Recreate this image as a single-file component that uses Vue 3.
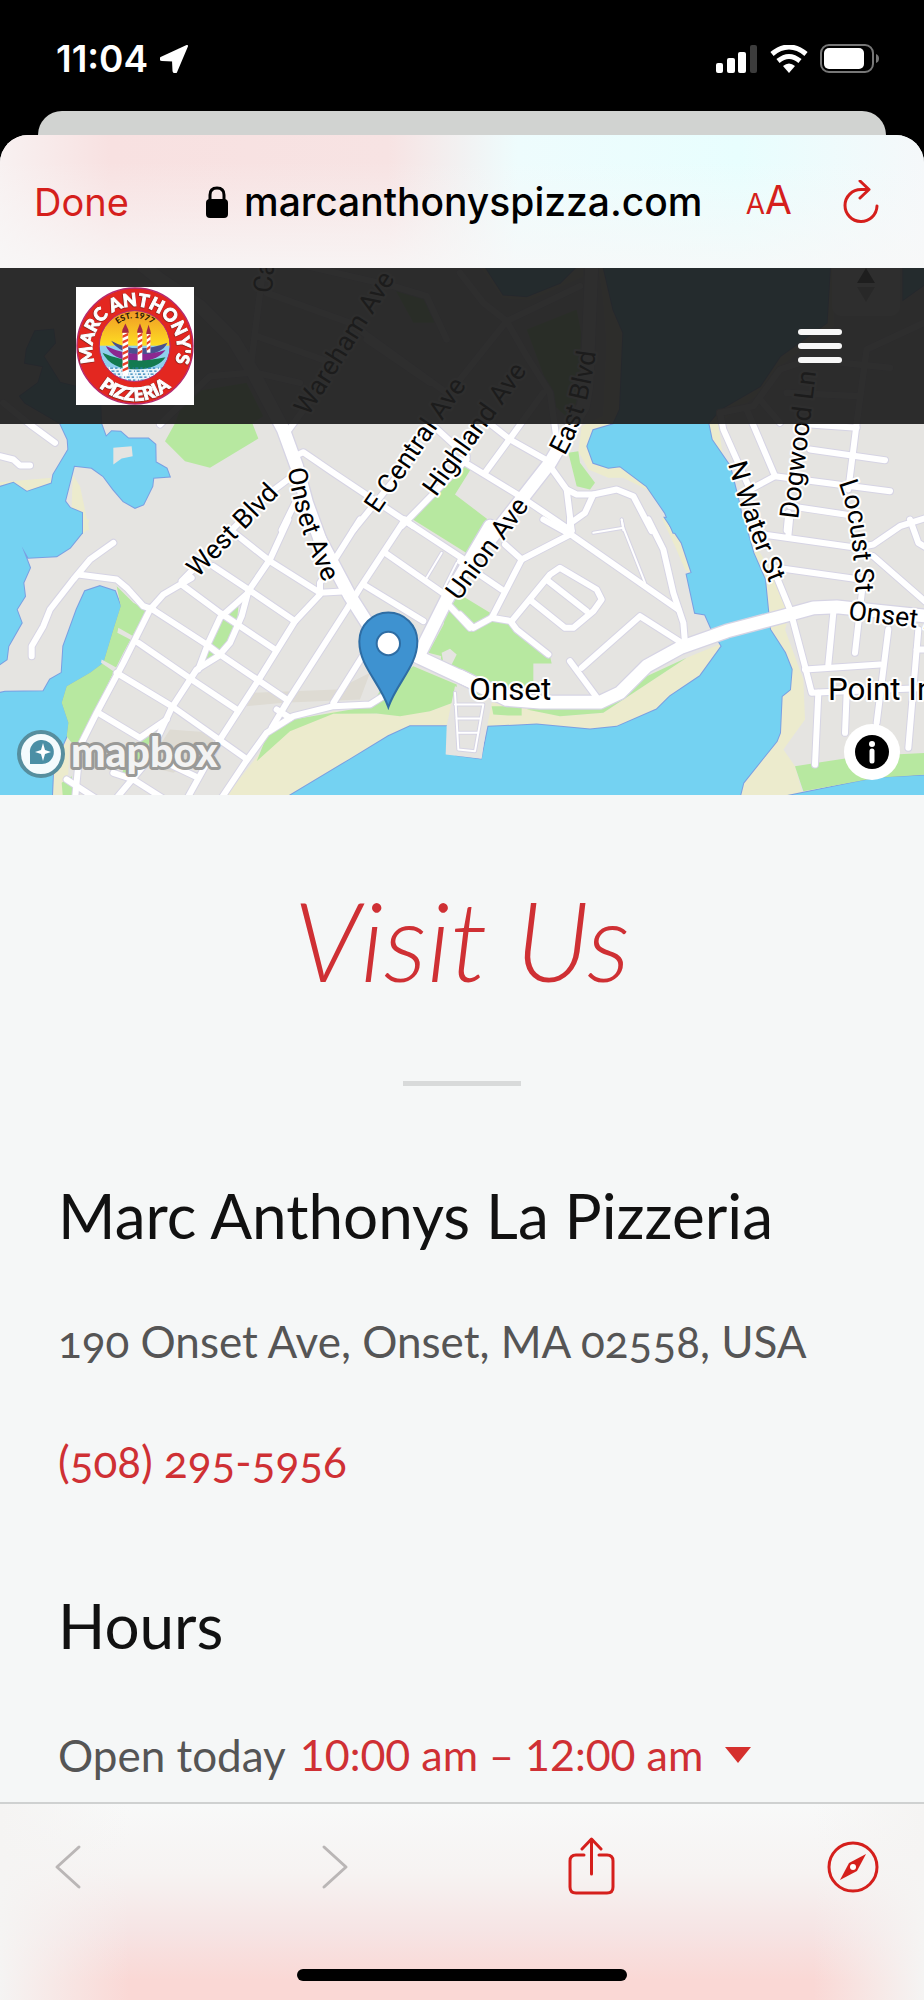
<template>
  <div class="screen">
    <!-- Status bar -->
    <header class="status">
      <div class="status-left">
        <span class="hora">11:04</span>
        <svg class="ico-loc" viewBox="0 0 28 28">
          <path d="M27 1 L1 13 Q0 15 2 15 L13 15.500 L13.500 26 Q14 28 16 27 Z" fill="#fff" stroke="#fff" stroke-width="2" stroke-linejoin="round" />
        </svg>
      </div>
      <div class="status-right">
        <svg class="ico-signal" viewBox="0 0 42 28">
          <rect x="0" y="18" width="7" height="10" rx="2" fill="#fff" />
          <rect x="11" y="13" width="8" height="15" rx="2" fill="#fff" />
          <rect x="22" y="7" width="8" height="21" rx="2" fill="#fff" />
          <rect x="34" y="0" width="7" height="28" rx="2" fill="#3c3c3c" />
        </svg>
        <svg class="ico-wifi" viewBox="0 0 38 28">
          <path d="M2 9 Q19 -5 36 9 M8 16 Q19 7 30 16" fill="none" stroke="#fff" stroke-width="5" />
          <path d="M13 21 Q19 16 25 21 L19 28 Z" fill="#fff" />
        </svg>
        <svg class="ico-bat" viewBox="0 0 60 30">
          <rect x="1" y="1" width="52" height="27" rx="8" fill="none" stroke="#777" stroke-width="2" />
          <rect x="4" y="4" width="40" height="21" rx="5" fill="#fff" />
          <path d="M56 10 Q59 11 59 14.500 Q59 18 56 19 Z" fill="#777" />
        </svg>
      </div>
    </header>
    <div class="card-back"></div>

    <!-- Browser sheet -->
    <div class="sheet">
      <div class="url-bar">
        <button class="btn-done" type="button">Done</button>
        <div class="url">
          <svg class="ico-lock" viewBox="0 0 22 32">
            <rect x="0" y="13" width="22" height="19" rx="4" />
            <path d="M4 15 V9 Q4 2 11 2 Q18 2 18 9 V15" fill="none" stroke="#000" stroke-width="3" />
          </svg>
          <span>marcanthonyspizza.com</span>
        </div>
        <button class="btn-aa" type="button" aria-label="Text size"><small>A</small>A</button>
        <button class="btn-reload" type="button" aria-label="Reload">
          <svg viewBox="0 0 38 44">
            <path d="M35 26 A16 16 0 1 1 19 9.500 L26 9.500 M18 1 L27 9.500 L18 18" />
          </svg>
        </button>
      </div>

      <section class="map-area">
        <svg class="map" viewBox="0 24 2772 1584" preserveAspectRatio="xMidYMid slice">
          <rect x="0" y="0" width="2772" height="1640" fill="#e5e4e1" />
          <g v-for="capa in capas" :key="capa.clase" :class="capa.clase">
            <g v-for="t in tiles" :key="t.id" :transform="`translate(${t.x} ${t.y})`">
              <polygon v-for="p in t[capa.datos]" :key="p" :points="p" />
            </g>
          </g>
          <g v-for="capa in ['casing', 'fill']" :key="capa" :class="capa">
            <g v-for="t in tiles" :key="t.id" :transform="`translate(${t.x} ${t.y})`">
              <polyline v-for="r in t.thin" :key="r" :points="r" class="thin" />
              <polyline v-for="r in t.roads" :key="r" :points="r" />
              <polyline v-for="r in t.major" :key="r" :points="r" class="major" />
            </g>
          </g>

          <!-- Street names -->
          <defs>
            <path v-for="l in labels" :id="l.id" :key="l.id" :d="l.d" />
          </defs>
          <text v-for="l in labels" :key="l.id" class="street">
            <textPath :href="'#' + l.id">{{ l.text }}</textPath>
          </text>
          <text class="place" x="1408" y="1322">Onset</text>
          <text class="place" x="2484" y="1322">Point Independence</text>

          <!-- Marker -->
          <g stroke="#2e6da4" stroke-width="6">
            <path d="M1165 1343 C1140 1270 1078 1220 1078 1146 A87 87 0 0 1 1252 1146 C1252 1220 1190 1270 1165 1343 Z" fill="#3e92d0" />
            <circle cx="1165" cy="1152" r="35" fill="#fff" />
          </g>
        </svg>

        <div class="compass-ctrl">
          <svg viewBox="0 0 18 34">
            <path d="M9 0 L18 15 H0 Z" fill="#222" />
            <path d="M9 34 L18 19 H0 Z" fill="#aaa" />
          </svg>
        </div>

        <nav class="site-nav">
          <a href="#" class="logo" aria-label="Marc Anthony's Pizzeria">
            <svg viewBox="0 0 356 356">
              <defs>
                <path id="arcoTop" d="M62 240 A128 128 0 1 1 294 240" />
                <path id="arcoBottom" d="M18 200 A161 161 0 0 0 338 200" />
                <path id="arcoEst" d="M94 178 A84 84 0 0 1 262 178" />
                <clipPath id="disco"><circle cx="177" cy="178" r="106" /></clipPath>
                <linearGradient id="cielo" x1="0" y1="0" x2="0" y2="1">
                  <stop offset="0" stop-color="#ee9026" />
                  <stop offset="1" stop-color="#ffe322" />
                </linearGradient>
              </defs>
              <rect width="356" height="356" fill="#fff" />
              <circle cx="178" cy="178" r="175" fill="#e32720" stroke="#b52a70" stroke-width="4" />
              <g clip-path="url(#disco)">
                <rect x="60" y="60" width="236" height="125" fill="url(#cielo)" />
                <rect x="60" y="177" width="236" height="120" fill="#8fcfee" />
                <path d="M106 162 Q180 205 276 168 Q262 200 200 206 Q130 200 106 162" fill="#49508f" />
                <path d="M90 178 Q180 220 270 190 Q250 220 190 226 Q110 222 90 178" fill="#8b2790" />
                <path d="M80 198 Q160 236 270 212 Q248 246 180 250 Q104 246 80 198" fill="#137a50" />
                <path d="M70 236 Q180 260 290 238 V300 H70 Z" fill="#eaf4fa" />
                <path v-for="n in 5" :key="n" :d="`M${76 + n * 4} ${236 + n * 9} H290`" stroke="#287fb5" stroke-width="4" stroke-dasharray="7 8 3 5 9 6" />
              </g>
              <circle cx="177" cy="178" r="107" fill="none" stroke="#b52a70" stroke-width="3" />
              <g v-for="p in postes" :key="p.x">
                <path :d="`M${p.x} ${p.y} V${p.fin}`" stroke="#fff" :stroke-width="p.w" />
                <path v-for="y in rayas(p)" :key="y" :d="`M${p.x - p.w / 2} ${y} l${p.w} -8 v8 l${-p.w} 8 Z`" fill="#e8402a" />
                <path :d="`M${p.x - p.w / 2 - 2} ${p.y} L${p.x - p.w / 2} ${p.y - 10} L${p.x} ${p.y - 28} L${p.x + p.w / 2} ${p.y - 10} l2 10 Z`" fill="#a72845" />
              </g>
              <g class="logo-text">
                <text><textPath href="#arcoTop" startOffset="50%">MARC ANTHONY'S</textPath></text>
                <text><textPath href="#arcoBottom" startOffset="50%">PIZZERIA</textPath></text>
              </g>
              <text class="logo-est"><textPath href="#arcoEst" startOffset="50%">EST. 1977</textPath></text>
            </svg>
          </a>
          <button class="btn-menu" type="button" aria-label="Menu">
            <span></span>
            <span></span>
            <span></span>
          </button>
        </nav>

        <a class="mapbox" href="#" aria-label="Mapbox">
          <svg viewBox="0 0 206 50">
            <circle cx="25" cy="25" r="22" fill="#f4fbfd" stroke="#568e9e" stroke-width="4" />
            <path d="M14 35 V25 A12 12 0 1 1 26 35 Z" fill="#4b8fa5" />
            <path d="M27 14 L29 21 L35 23 L29 25 L27 32 L25 25 L19 23 L25 21 Z" fill="#fff" />
            <text x="55" y="38">mapbox</text>
          </svg>
        </a>
        <button class="btn-info" type="button" aria-label="Map information">
          <svg viewBox="0 0 34 34">
            <circle cx="17" cy="17" r="17" />
            <circle cx="17" cy="9" r="3" fill="#fff" />
            <path d="M17 16 V26" stroke="#fff" stroke-width="5" stroke-linecap="round" />
          </svg>
        </button>
      </section>

      <main class="content">
        <h1>Visit Us</h1>
        <hr />
        <h2>Marc Anthonys La Pizzeria</h2>
        <p class="address">190 Onset Ave, Onset, MA 02558, USA</p>
        <p class="phone"><a href="tel:5082955956">(508) 295-5956</a></p>
        <h2 class="hours-title">Hours</h2>
        <div class="hours">
          <span>Open today</span>
          <button type="button" class="btn-hours" @click="abierto = !abierto">
            10:00 am – 12:00 am
            <svg viewBox="0 0 26 16"><path d="M0 0 H26 L13 16 Z" fill="#d5302d" /></svg>
          </button>
        </div>
      </main>
    </div>

    <!-- Browser toolbar -->
    <footer class="toolbar">
      <div class="tools">
        <button type="button" disabled aria-label="Back">
          <svg viewBox="0 0 52 60"><path d="M37 10 L15 30 L37 50" stroke="#bab6b6" /></svg>
        </button>
        <button type="button" disabled aria-label="Forward">
          <svg viewBox="0 0 52 60"><path d="M20 10 L42 30 L20 50" stroke="#bab6b6" /></svg>
        </button>
        <button type="button" aria-label="Share">
          <svg viewBox="0 0 52 60">
            <path d="M19 18 H11 Q5 18 5 24 V50 Q5 56 11 56 H42 Q48 56 48 50 V24 Q48 18 42 18 H34 M26.500 37 V3 M17 12 L26.500 2 L36 12" />
          </svg>
        </button>
        <button type="button" aria-label="Open in browser">
          <svg viewBox="0 0 52 60">
            <circle cx="26" cy="30" r="24" />
            <path d="M39 17 L30 34 L13 43 L22 26 Z" fill="#d51f1c" stroke="none" />
            <circle cx="26" cy="30" r="3" fill="#fff" stroke="none" />
          </svg>
        </button>
      </div>
      <div class="home-bar"></div>
    </footer>
  </div>
</template>

<script setup>
import { ref } from "vue";

const abierto = ref(false);

// Drawing order of the areas, shared by every tile
const capas = [
  { clase: "shade", datos: "shade" },
  { clase: "sand", datos: "sand" },
  { clase: "shore", datos: "water" },
  { clase: "water", datos: "water" },
  { clase: "park", datos: "park" },
  { clase: "land", datos: "land" },
];

// Map geometry, split in four tiles that share one scale
const tiles = [
  {
    id: "nw",
    x: 0,
    y: 0,
    sand: [
      "0,668 155,655 155,675 80,697 40,670 0,685",
      "218,645 240,680 268,812 246,812 246,760 215,745",
    ],
    water: [
      "180,491 75,430 60,410 115,370 130,320 75,310 80,270 105,215 160,210 165,250 130,290 155,330 180,370 300,400 303,491 318,532 335,515 362,517 385,537 445,537 466,555 467,608 500,627 509,651 460,655 457,680 430,735 405,745 370,725 340,690 310,650 275,625 222,619 195,725 210,745 246,760 246,820 -9,820 -9,685 40,670 80,697 155,672 160,645 205,570 203,540",
    ],
    park: [
      "560,400 740,370 790,470 757,491 775,537 630,625 555,605 495,545 525,491",
      "1392,600 1415,625 1365,705 1490,800 1415,890 1235,778",
      "1180,80 1260,95 1310,190 1240,190",
    ],
    land: ["340,565 395,560 398,590 365,597 340,615"],
    roads: [
      "10,430 90,495 165,550",
      "0,590 40,600 60,618 90,618",
      "790,20 750,340 630,350 480,495",
      "800,100 1050,190 1340,400",
      "770,230 980,305",
      "1100,240 1290,370",
      "1340,240 1280,110 1180,80 920,20",
      "860,520 1050,260",
      "770,340 900,370",
      "885,590 910,578 1000,640 1240,800",
      "1290,490 1400,590",
      "1400,600 1205,800",
      "1240,590 1060,812",
      "870,655 790,715 545,965",
      "890,720 845,812",
    ],
    major: ["430,20 480,60 600,140 700,240 760,340 850,510 890,620 920,730 960,840"],
  },
  {
    id: "ne",
    x: 1380,
    y: 0,
    sand: [
      "60,20 130,115 210,120 370,50 370,20",
      "415,20 430,120 440,250 430,470 365,500 355,575 385,630 445,655 490,655 560,690 610,750 640,812 700,812 700,20",
      "690,812 860,812 830,720 790,600 775,491 900,400 960,320 1120,200 1120,20 690,20",
    ],
    water: [
      "75,20 130,105 200,110 300,70 350,20",
      "430,20 460,150 490,220 480,450 460,494 400,512 382,560 400,610 445,625 480,620 560,680 615,760 640,820 852,820 840,740 810,620 755,540 745,491 780,450 900,380 960,290 1100,190 1110,20",
      "1330,20 1400,20 1400,70 1330,120",
    ],
    park: [
      "325,580 355,575 360,610 405,670 390,690 350,680",
      "200,210 350,150 370,250 350,500 285,440",
    ],
    roads: [
      "0,600 180,710 335,815",
      "80,485 150,540 265,605",
      "250,400 75,640",
      "270,620 320,690 350,705 400,705 470,690 520,710 575,815",
      "320,690 335,812",
      "400,705 375,760 340,785",
      "0,40 70,130 140,185 200,290 270,400 290,540",
      "140,185 360,80",
      "140,185 0,360",
      "780,460 790,510 870,690",
      "860,450 945,650 870,690",
      "945,650 1290,695",
      "1050,495 1190,505",
      "1050,570 1275,602",
      "1392,190 1220,270 1190,491 1165,690",
      "990,740 1190,770",
      "985,760 980,812",
      "980,400 1200,410",
      "780,460 880,440 960,330 1050,300 1290,325",
      "900,420 960,490",
    ],
    thin: ["485,780 490,812"],
    major: ["395,20 380,380 370,440 270,610 90,840"],
  },
  {
    id: "sw",
    x: 0,
    y: 780,
    shade: [
      "760,520 1010,510 1110,460 1080,540 850,550 740,560",
      "510,630 640,640 640,700 520,760 440,740",
    ],
    sand: [
      "670,840 780,700 870,620 1000,575 1170,585 1290,575 1370,545 1350,625 860,840",
      "210,640 205,760 185,840 150,840 160,740",
      "246,0 268,0 262,30 210,85 240,40",
    ],
    water: [
      "-9,-5 246,-5 246,40 210,85 170,110 85,115 65,80 90,145 70,190 75,230 50,270 65,310 25,380 20,420 -9,440",
      "300,200 345,215 362,260 340,330 310,430 270,460 200,500 185,550 205,610 200,650 160,740 155,850 -9,850 -9,522 15,517 130,515 150,480 185,460 190,380 230,270 255,215",
      "850,840 1050,720 1165,650 1230,620 1345,620 1400,850",
    ],
    park: [
      "350,200 400,250 440,270 370,400 290,560 230,690 200,650 205,610 185,550 200,500 270,460 310,430 340,330 362,260",
      "1240,440 1370,495 1370,545 1290,575 1200,590 1130,582 1000,583 870,635 770,725 800,650 880,600 1110,560 1150,500",
      "715,260 710,320 680,380 655,410 605,435 620,370 660,300",
      "1350,280 1425,330 1480,450 1285,400",
      "475,625 430,700 400,775 360,770 420,660",
      "185,790 215,770 225,850 190,850",
    ],
    land: [
      "1325,400 1350,388 1370,405 1355,435 1330,430",
      "355,325 400,350 395,362 352,340",
      "305,420 350,445 340,455 303,430",
    ],
    roads: [
      "340,70 270,120 220,180 150,270 130,320 95,380 95,410",
      "235,165 350,180 380,205 430,260 460,270",
      "575,175 490,225 450,270 370,430 290,580 240,680 225,840",
      "690,30 810,125 960,220 1040,215",
      "640,140 745,210 885,305",
      "545,195 660,280 825,390",
      "450,265 620,375 660,405 860,540",
      "415,370 575,480 710,570",
      "350,460 515,560 735,715",
      "295,580 420,655 500,600",
      "500,730 585,770",
      "865,0 810,120 745,215 725,290 690,370 655,410 590,450 515,565 480,640 430,740 350,835",
      "745,220 660,295 625,370 595,450",
      "1080,0 960,190 960,225 885,305 770,490 660,660",
      "660,660 560,840",
      "1215,0 1080,205 1040,270 860,550 815,625",
      "1100,390 1000,550",
      "1090,195 1270,305",
      "1155,100 1335,225",
      "1210,0 1400,125",
      "1340,250 1410,325",
      "1150,530 1110,555 1000,560 880,590 800,640 735,730 655,850",
      "830,570 870,595",
      "200,780 300,845",
      "340,760 400,780 510,850",
    ],
    thin: ["1325,100 1280,175", "1370,130 1335,200"],
    major: [
      "960,60 1050,230 1120,340 1260,415 1420,490 1520,530",
      "1470,20 1340,240 1260,400",
    ],
  },
  {
    id: "se",
    x: 1380,
    y: 780,
    sand: [
      "605,-5 635,-5 665,70 700,165 675,150 645,80",
      "185,560 300,590 430,580 680,415 790,370 720,480 590,580 470,632 390,640 230,625 80,630 95,550",
      "840,-5 860,-5 900,100 950,180 990,280 975,330 1030,480 1035,600 970,690 1005,740 1035,850 800,850 900,600 900,300",
    ],
    water: [
      "615,-5 850,-5 880,100 915,180 920,230 930,330 975,400 995,450 990,510 965,530 960,640 950,665 850,790 835,850 -45,850 -45,705 65,720 85,622 230,615 390,630 470,622 590,570 630,530 720,470 785,380 755,330 735,285 705,280 680,165 695,160 665,70",
      "970,832 1250,775 1400,768 1400,850",
    ],
    park: [
      "-40,215 0,225 90,280 155,315 270,410 275,432 220,432 220,530 60,530 -60,450",
      "200,570 420,560 560,470 680,415 430,580 300,590",
      "95,560 185,560 185,588 145,588 100,585",
      "1005,740 1200,710 1400,700 1400,765 1250,775 1030,815",
    ],
    land: ["-15,500 90,545 65,718 -43,705 -40,620"],
    roads: [
      "250,0 340,50 655,270",
      "330,0 330,45 185,120 95,295 40,325 0,285",
      "135,75 185,120",
      "0,125 125,210",
      "95,295 155,305 270,165 300,145 410,210 425,240 400,275 340,325 315,325 215,245",
      "265,185 380,275",
      "155,310 170,330 265,405",
      "565,0 610,90 640,220 670,310 675,370",
      "665,370 540,290 365,445",
      "330,425 415,540",
      "990,0 985,50",
      "910,45 1190,85 1240,75 1320,20 1400,-5",
      "950,145 1200,180",
      "945,160 990,270 1035,440 1055,520 1400,505",
      "1210,180 1185,400",
      "1240,110 1400,250",
      "1120,280 1105,435",
      "1035,450 1260,435",
      "1285,330 1250,610",
      "1375,330 1345,685",
      "1075,520 1065,735",
      "1160,520 1155,640",
      "1370,390 1400,390",
      "1350,0 1375,70 1400,85",
    ],
    thin: [
      "400,40 490,25 555,190",
      "485,0 490,25",
      "-15,520 -5,690 45,695 70,555 -15,555",
      "-10,597 60,597",
      "-5,640 55,640",
    ],
    major: [
      "0,470 140,540 240,548 420,548 480,520 560,440 660,385 800,335 970,290 1060,265 1130,262 1400,290",
    ],
  },
];

const labels = [
  { id: "st-west", text: "West Blvd", d: "M593 956 L850 692" },
  { id: "st-onset", text: "Onset Ave", d: "M864 628 Q888 830 1020 1060" },
  { id: "st-wareham", text: "Wareham Ave", d: "M925 472 L1225 -5" },
  { id: "st-central", text: "E Central Ave", d: "M1134 764 L1440 320" },
  { id: "st-highland", text: "Highland Ave", d: "M1308 714 L1620 280" },
  { id: "st-union", text: "Union Ave", d: "M1377 1026 L1650 656" },
  { id: "st-east", text: "East Blvd", d: "M1694 590 Q1780 440 1797 180" },
  { id: "st-water", text: "N Water St", d: "M2184 614 Q2225 770 2320 1000" },
  { id: "st-dogwood", text: "Dogwood Ln", d: "M2394 780 L2453 300" },
  { id: "st-locust", text: "Locust St", d: "M2516 670 Q2562 790 2568 1030" },
  { id: "st-onset2", text: "Onset Ave", d: "M2543 1080 L3000 1134" },
  { id: "st-ca", text: "Ca", d: "M815 102 L830 -60" },
];

// Striped poles of the logo
const postes = [
  { x: 149, y: 138, fin: 268, w: 17 },
  { x: 193, y: 138, fin: 222, w: 14 },
  { x: 219, y: 142, fin: 198, w: 11 },
];

function rayas(p) {
  const lista = [];
  for (let y = p.y + 8; y < p.fin - 8; y += 17) lista.push(y);
  return lista;
}
</script>

<style>
body {
  margin: 0;
  background: #000;
}
</style>

<style scoped>
.screen {
  min-height: 100vh;
  display: flex;
  flex-direction: column;
  background: #000;
  font-family: Inter, "Liberation Sans", sans-serif;
}

button {
  border: none;
  background: transparent;
  padding: 0;
  font-family: inherit;
  color: #d51f1c;
  cursor: pointer;
}

svg {
  display: block;
}

/* Status bar */
.status {
  height: 111px;
  padding: 0 44px 0 56px;
  display: flex;
  justify-content: space-between;
  align-items: center;
  box-sizing: border-box;
}

.status-left,
.status-right {
  display: flex;
  align-items: center;
  gap: 12px;
  padding-top: 6px;
}

.hora {
  color: #fff;
  font-size: 37px;
  line-height: 40px;
  font-weight: 600;
}

.ico-loc {
  width: 28px;
  height: 28px;
}

.ico-signal {
  width: 42px;
  height: 28px;
}

.ico-wifi {
  width: 38px;
  height: 28px;
}

.ico-bat {
  width: 60px;
  height: 30px;
}

.card-back {
  height: 24px;
  margin: 0 38px;
  border-radius: 24px 24px 0 0;
  background: #d1d3d1;
}

/* Sheet */
.sheet {
  flex: 1;
  display: flex;
  flex-direction: column;
  border-radius: 28px 28px 0 0;
  overflow: hidden;
  background: #f5f7f7;
}

.url-bar {
  height: 133px;
  padding: 0 44px 0 34px;
  display: flex;
  align-items: center;
  box-sizing: border-box;
  background:
    linear-gradient(to bottom, rgba(248, 248, 248, 0) 20%, rgba(248, 248, 248, 0.8) 100%),
    linear-gradient(to right, #f8f1f1 0%, #f8e1e1 12%, #f7e3e3 42%, #eefcfd 56%, #e8fefe 80%, #f5f8fa 100%);
}

.btn-done {
  font-size: 38px;
  line-height: 44px;
}

.url {
  flex: 1;
  display: flex;
  align-items: center;
  justify-content: center;
  gap: 16px;
  padding-left: 34px;
  font-size: 39px;
  line-height: 44px;
  font-weight: 500;
  color: #000;
}

.ico-lock {
  width: 22px;
  height: 32px;
}

.btn-aa {
  font-size: 39px;
  line-height: 44px;
}

.btn-aa small {
  font-size: 28px;
}

.btn-reload {
  margin-left: 50px;
}

.btn-reload svg {
  width: 38px;
  height: 44px;
  fill: none;
  stroke: #d51f1c;
  stroke-width: 3;
  stroke-linecap: round;
  stroke-linejoin: round;
}

/* Map */
.map-area {
  position: relative;
  height: 527px;
  overflow: hidden;
}

.map {
  width: 100%;
  height: 100%;
}

.land {
  fill: #e5e4e1;
}

.shade {
  fill: #dedbd3;
}

.sand {
  fill: #ecebcd;
}

.shore {
  fill: none;
  stroke: #7a9fe2;
  stroke-width: 6;
}

.water {
  fill: #74d2f2;
}

.park {
  fill: #b7e8a0;
}

.casing polyline,
.fill polyline {
  fill: none;
  stroke-linecap: round;
  stroke-linejoin: round;
}

.casing polyline {
  stroke: #d6d4e4;
  stroke-width: 24;
}

.fill polyline {
  stroke: #fff;
  stroke-width: 18;
}

.casing .thin {
  stroke-width: 12;
}

.fill .thin {
  stroke-width: 6;
}

.casing .major {
  stroke-width: 46;
}

.fill .major {
  stroke-width: 38;
}

.street,
.place {
  font-family: Roboto, sans-serif;
  font-size: 80px;
  fill: #000;
  stroke: #fff;
  stroke-width: 12;
  stroke-linejoin: round;
  paint-order: stroke;
}

.place {
  font-size: 94px;
}

.compass-ctrl {
  position: absolute;
  top: -12px;
  right: 24px;
  width: 68px;
  height: 60px;
  padding-top: 12px;
  box-sizing: border-box;
  border-radius: 10px;
  background: #fff;
  display: flex;
  justify-content: center;
}

.compass-ctrl svg {
  width: 18px;
  height: 34px;
}

.site-nav {
  position: absolute;
  inset: 0 0 auto 0;
  height: 156px;
  padding: 0 82px 0 76px;
  box-sizing: border-box;
  display: flex;
  align-items: center;
  justify-content: space-between;
  background: rgba(30, 30, 30, 0.93);
}

.logo svg {
  width: 118px;
  height: 118px;
}

.logo-text {
  font-family: Lato, sans-serif;
  font-weight: 900;
  font-size: 54px;
  text-anchor: middle;
  fill: #fff;
  stroke: #fff;
  stroke-width: 3;
  filter: drop-shadow(-1px 1px 0 #3a1510);
}

.logo-est {
  font-family: Lato, sans-serif;
  font-weight: 900;
  font-size: 25px;
  text-anchor: middle;
  fill: #2b1a08;
}

.btn-menu {
  display: flex;
  flex-direction: column;
  gap: 8px;
}

.btn-menu span {
  width: 44px;
  height: 6px;
  border-radius: 3px;
  background: #f7f7f7;
}

.mapbox {
  position: absolute;
  left: 16px;
  bottom: 16px;
}

.mapbox svg {
  width: 206px;
  height: 50px;
}

.mapbox text {
  font-family: Lato, sans-serif;
  font-weight: 900;
  font-size: 41px;
  fill: #fff;
  fill-opacity: 0.9;
  stroke: #9a9a98;
  stroke-width: 6;
  stroke-linejoin: round;
  paint-order: stroke;
}

.btn-info {
  position: absolute;
  right: 24px;
  bottom: 15px;
  width: 56px;
  height: 56px;
  border-radius: 50%;
  background: #fff;
  display: flex;
  align-items: center;
  justify-content: center;
}

.btn-info svg {
  width: 34px;
  height: 34px;
}

/* Content */
.content {
  flex: 1;
  padding: 78px 58px 18px;
  font-family: Lato, sans-serif;
  font-size: 44px;
  line-height: 54px;
  color: #555;
}

h1 {
  margin: 0;
  font-size: 110px;
  line-height: 132px;
  font-weight: 300;
  font-style: italic;
  text-align: center;
  color: #cf3034;
}

hr {
  width: 118px;
  height: 5px;
  margin: 76px auto 92px;
  border: none;
  background: #d8dada;
}

h2 {
  margin: 0;
  font-size: 62px;
  line-height: 74px;
  font-weight: 400;
  color: #111;
}

p {
  margin: 0;
}

.address {
  margin-top: 62px;
  font-variant-numeric: oldstyle-nums;
}

.phone {
  margin-top: 66px;
  font-variant-numeric: oldstyle-nums;
}

.phone a {
  color: #cf3034;
  text-decoration: none;
}

.hours-title {
  margin-top: 100px;
}

.hours {
  margin-top: 66px;
  display: flex;
  gap: 14px;
}

.btn-hours {
  display: flex;
  align-items: center;
  gap: 22px;
  font-size: 43px;
  line-height: 54px;
  color: #cf3034;
}

.btn-hours svg {
  width: 26px;
  height: 16px;
}

/* Toolbar */
.toolbar {
  height: 198px;
  box-sizing: border-box;
  border-top: 2px solid #cfd1d1;
  display: flex;
  flex-direction: column;
  justify-content: space-between;
  align-items: center;
  background:
    linear-gradient(to right, #f5f4f3 0%, rgba(245, 244, 243, 0) 14%, rgba(245, 244, 243, 0) 88%, #f5f4f3 100%),
    linear-gradient(to bottom, #f8f9f9 0%, #f6f3f2 35%, #f6e4e4 65%, #fad8d5 90%);
}

.tools {
  width: 100%;
  padding: 33px 45px 0 42px;
  box-sizing: border-box;
  display: flex;
  justify-content: space-between;
}

.tools svg {
  width: 52px;
  height: 60px;
  fill: none;
  stroke: #d51f1c;
  stroke-width: 3;
  stroke-linecap: round;
  stroke-linejoin: round;
}

.home-bar {
  width: 330px;
  height: 12px;
  margin-bottom: 19px;
  border-radius: 6px;
  background: #000;
}
</style>
